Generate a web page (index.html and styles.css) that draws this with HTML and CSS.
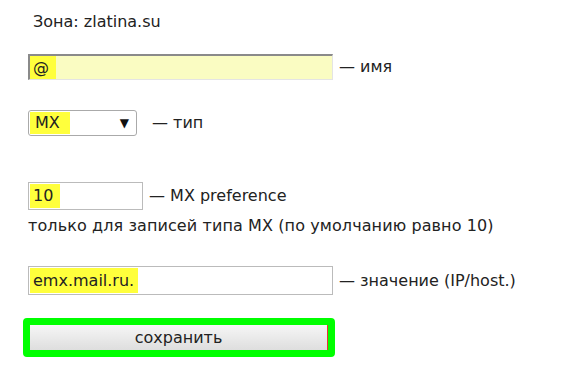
FILE: index.html
```html
<!DOCTYPE html>
<html lang="ru">
<head>
    <meta charset="UTF-8">
    <title>Зона zlatina.su</title>
    <link rel="stylesheet" href="styles.css">
</head>
<body>
    <div class="container">
        <div class="zone">Зона: zlatina.su</div>

        <form class="record-form">
            <div class="row row-name">
                <span class="field field-name"><span class="mark mark-name">@</span></span>
                <span class="hint">— имя</span>
            </div>

            <div class="row row-type">
                <span class="select"><span class="mark mark-type">MX</span><span class="arrow">▼</span></span>
                <span class="hint">— тип</span>
            </div>

            <div class="row row-pref">
                <span class="field field-pref"><span class="mark mark-pref">10</span></span>
                <span class="hint">— MX preference</span>
            </div>
            <div class="note">только для записей типа MX (по умолчанию равно 10)</div>

            <div class="row row-value">
                <span class="field field-value"><span class="mark mark-value">emx.mail.ru.</span></span>
                <span class="hint">— значение (IP/host.)</span>
            </div>

            <div class="save-wrap">
                <button type="button" class="save">сохранить</button>
            </div>
        </form>
    </div>
</body>
</html>
```

FILE: styles.css
```css
body {
    font-family: "DejaVu Sans", Verdana, sans-serif;
    font-size: 16px;
    color: #222;
    background-color: #fff;
    margin: 0;
    padding: 0;
}

.container {
    padding: 12px 0 0 28px;
}

.zone {
    padding-left: 5px;
    line-height: 20px;
}

.record-form {
    margin-top: 22px;
}

.row {
    display: flex;
    align-items: center;
    line-height: 18px;
}

.hint {
    margin-left: 6px;
}

.field {
    display: flex;
    align-items: stretch;
    box-sizing: border-box;
    border: 1px solid #bbb;
    background-color: #fff;
    padding: 1px;
}

.mark {
    display: flex;
    align-items: center;
    box-sizing: border-box;
    background-color: #ffff3c;
    padding-left: 3px;
    white-space: nowrap;
}

.mark-name {
    width: 26px;
}

.mark-type {
    width: 40px;
    padding-left: 5px;
}

.mark-pref {
    width: 30px;
}

.mark-value {
    width: 108px;
}

.field-name {
    width: 305px;
    height: 26px;
    background-color: #fafcc2;
    border-top: 2px solid #8a8a8a;
    border-left: 2px solid #8a8a8a;
    border-right: 1px solid #e4e4e4;
    border-bottom: 1px solid #e4e4e4;
    padding: 0;
}

.row-type {
    margin-top: 30px;
}

.select {
    display: flex;
    align-items: stretch;
    box-sizing: border-box;
    width: 109px;
    height: 26px;
    border: 1px solid #aaa;
    border-radius: 3px;
    padding: 1px;
}

.arrow {
    display: flex;
    align-items: center;
    margin-left: auto;
    margin-right: 6px;
    font-size: 12px;
    color: #111;
}

.row-type .hint {
    margin-left: 15px;
}

.row-pref {
    margin-top: 46px;
}

.field-pref {
    width: 115px;
    height: 28px;
}

.note {
    margin-top: 7px;
    line-height: 18px;
    letter-spacing: 0.1px;
}

.row-value {
    margin-top: 31px;
}

.field-value {
    width: 305px;
    height: 29px;
}

.save-wrap {
    width: 312px;
    box-sizing: border-box;
    margin: 23px 0 0 -5px;
    border: 7px solid #00ff00;
    border-radius: 4px;
}

.save {
    display: block;
    width: 100%;
    height: 25px;
    padding: 0;
    font-family: "DejaVu Sans", Verdana, sans-serif;
    font-size: 16px;
    color: #222;
    border: none;
    border-right: 1px solid #e33;
    background: linear-gradient(#f6f6f6, #dedede);
    cursor: pointer;
}
```
